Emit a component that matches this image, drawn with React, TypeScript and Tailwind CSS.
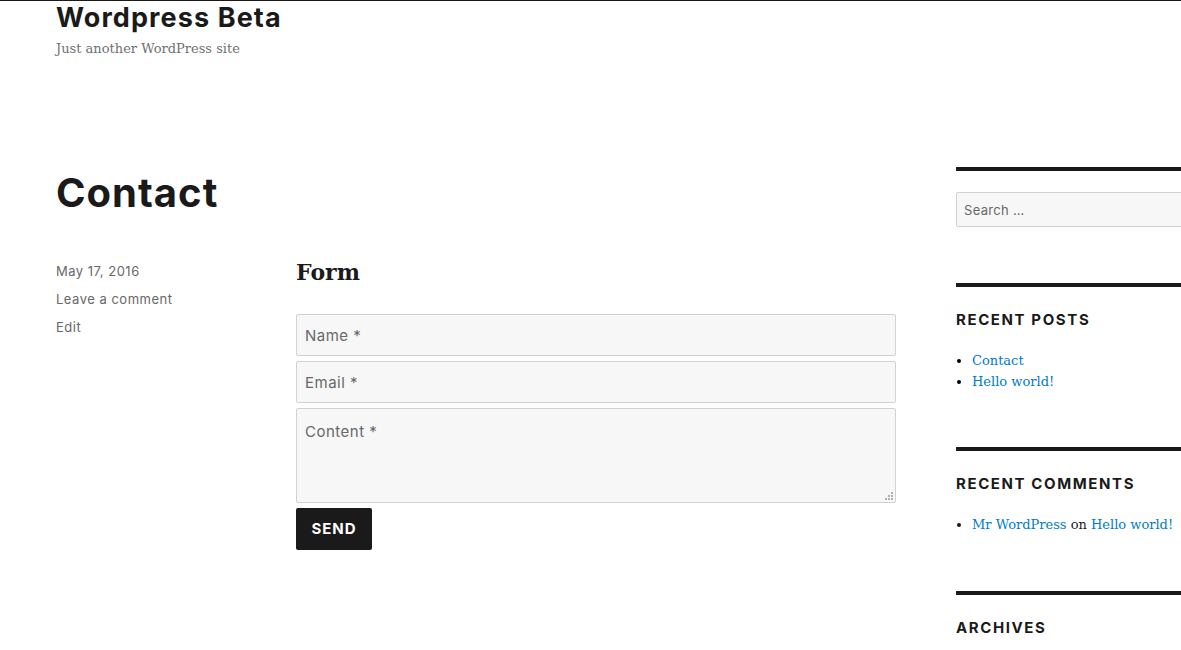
import React from "react";

const sans = "font-['Inter','Noto_Sans',sans-serif]";
const serif = "font-['DejaVu_Serif','Liberation_Serif',serif]";

function Widget({ title, children, pb = "pb-[55px]" }: { title: string; children?: React.ReactNode; pb?: string }) {
  return (
    <section className={`border-t-4 border-[#1a1a1a] pt-[23px] ${pb}`}>
      <h2 className={`${sans} text-[15px] leading-[20px] font-bold uppercase tracking-[1.6px] text-[#1a1a1a]`}>
        {title}
      </h2>
      <div className="mt-[20px]">{children}</div>
    </section>
  );
}

const field = `${sans} w-full bg-[#f7f7f7] border border-[#d1d1d1] rounded-[2px] px-[8px] text-[15px] tracking-[0.5px] text-[#686868] placeholder:text-[#686868] outline-none`;

export default function App() {
  return (
    <div className="min-h-[650px] bg-white border-t border-[#1a1a1a] overflow-hidden">
      {/* header */}
      <header className="pl-[56px] pt-[1px]">
        <h1 className={`${sans} text-[27px] leading-[32px] font-bold tracking-[1.1px] text-[#1a1a1a]`}>Wordpress Beta</h1>
        <p className={`${serif} text-[13px] leading-[20px] text-[#707070] mt-[5px]`}>
          Just another WordPress site
        </p>
      </header>

      <div className="flex pl-[56px] mt-[108px]">
        {/* main */}
        <main className="w-[840px] shrink-0">
          <h1 className={`${sans} text-[40px] leading-[48px] font-bold tracking-[1px] text-[#1a1a1a] pt-[2px]`}>Contact</h1>
          <div className="flex mt-[48px]">
            <div className={`${sans} w-[240px] shrink-0 text-[13px] leading-[28px] tracking-[0.5px] text-[#686868] -mt-[8px]`}>
              <div>May 17, 2016</div>
              <div>Leave a comment</div>
              <div>Edit</div>
            </div>
            <div className="w-[600px]">
              <h2 className={`${serif} text-[22px] leading-[28px] font-bold text-[#1a1a1a] -mt-[7px]`}>Form</h2>
              <form className="mt-[28px] flex flex-col gap-[5px]">
                <input placeholder="Name *" className={`${field} h-[42px]`} />
                <input placeholder="Email *" className={`${field} h-[42px]`} />
                <div className="relative">
                  <textarea
                    placeholder="Content *"
                    className={`${field} h-[95px] pt-[12px] block resize-none`}
                  />
                  <svg className="absolute right-[3px] bottom-[3px]" width="8" height="8" viewBox="0 0 8 8">
                    <rect x="6" y="0" width="2" height="2" fill="#b0b0b0" />
                    <rect x="3" y="3" width="2" height="2" fill="#b0b0b0" />
                    <rect x="6" y="3" width="2" height="2" fill="#b0b0b0" />
                    <rect x="0" y="6" width="2" height="2" fill="#b0b0b0" />
                    <rect x="3" y="6" width="2" height="2" fill="#b0b0b0" />
                    <rect x="6" y="6" width="2" height="2" fill="#b0b0b0" />
                  </svg>
                </div>
                <div>
                  <button
                    type="button"
                    className={`${sans} h-[42px] w-[76px] bg-[#1a1a1a] text-white rounded-[2px] text-[15px] font-bold tracking-[1px] uppercase`}
                  >
                    Send
                  </button>
                </div>
              </form>
            </div>
          </div>
        </main>

        {/* sidebar */}
        <aside className="ml-[60px] w-[300px] shrink-0">
          <section className="border-t-4 border-[#1a1a1a] pt-[21px] pb-[56px]">
            <input
              placeholder="Search …"
              className={`${sans} h-[35px] w-full bg-[#f7f7f7] border border-[#d1d1d1] rounded-[2px] px-[7px] text-[13px] tracking-[0.3px] text-[#686868] placeholder:text-[#686868] outline-none`}
            />
          </section>
          <Widget title="Recent Posts">
            <ul className={`${serif} list-disc pl-[16px] text-[13px] leading-[21px]`}>
              <li><a className="text-[#007acc]">Contact</a></li>
              <li><a className="text-[#007acc]">Hello world!</a></li>
            </ul>
          </Widget>
          <Widget title="Recent Comments" pb="pb-[56px]">
            <ul className={`${serif} list-disc pl-[16px] text-[13px] leading-[21px] text-[#1a1a1a]`}>
              <li>
                <a className="text-[#007acc]">Mr WordPress</a> on <a className="text-[#007acc]">Hello world!</a>
              </li>
            </ul>
          </Widget>
          <Widget title="Archives" />
        </aside>
      </div>
    </div>
  );
}
